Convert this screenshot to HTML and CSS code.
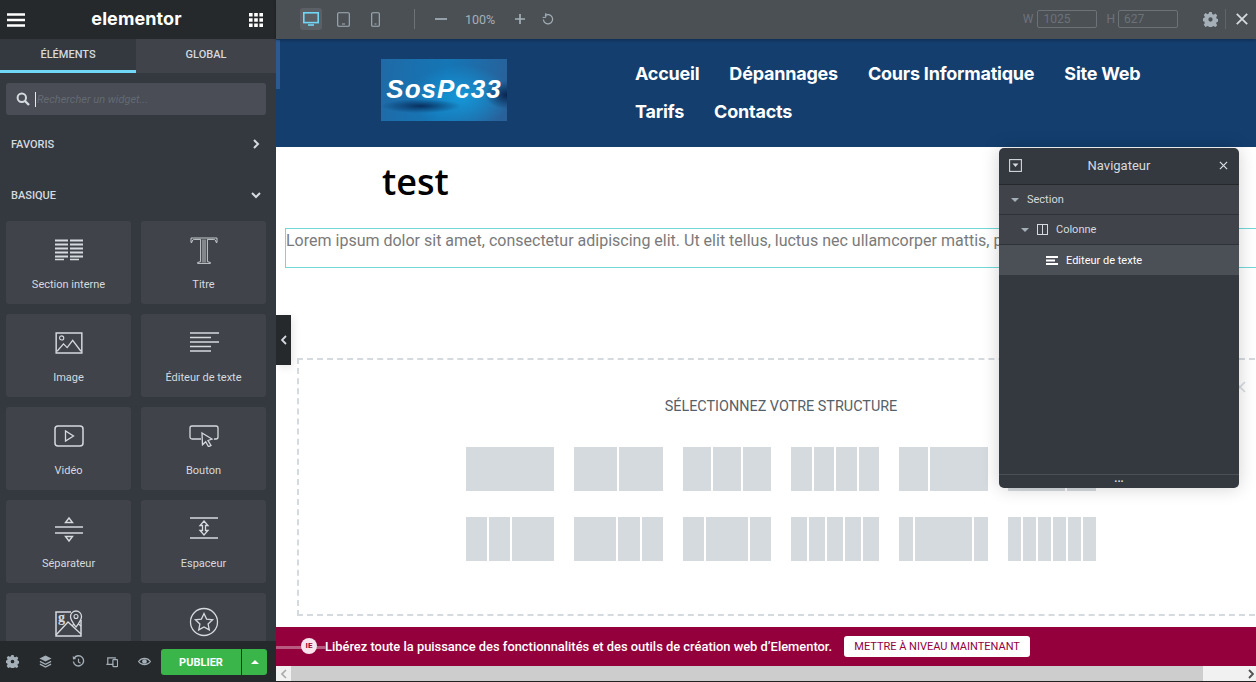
FILE: index.html
```html
<!DOCTYPE html>
<html lang="fr">
<head>
<meta charset="utf-8">
<title>Elementor</title>
<link rel="stylesheet" href="styles.css">
</head>
<body>
<div class="app">
  <aside class="panel">
    <header class="panel-head">
      <svg class="ic-burger" viewBox="0 0 18 14"><path d="M0 1.500h18M0 7h18M0 12.500h18" stroke="#fff" stroke-width="2.400"/></svg>
      <span class="brand">elementor</span>
      <svg class="ic-apps" viewBox="0 0 14 14" fill="#fff"><path d="M0 0h3.600v3.600H0zM5.200 0h3.600v3.600H5.200zM10.400 0H14v3.600h-3.600zM0 5.200h3.600v3.600H0zM5.200 5.200h3.600v3.600H5.200zM10.400 5.200H14v3.600h-3.600zM0 10.400h3.600V14H0zM5.200 10.400h3.600V14H5.200zM10.400 10.400H14V14h-3.600z"/></svg>
    </header>
    <nav class="tabs">
      <div class="tab tab-on">ÉLÉMENTS</div>
      <div class="tab">GLOBAL</div>
    </nav>
    <div class="search">
      <svg class="ic-search" viewBox="0 0 14 14"><circle cx="5.800" cy="5.800" r="4.200" fill="none" stroke="#d5dadf" stroke-width="2"/><path d="M9 9l4 4" stroke="#d5dadf" stroke-width="2.400"/></svg>
      <span class="caret"></span>
      <span class="placeholder">Rechercher un widget...</span>
    </div>
    <div class="cat cat-first"><span>FAVORIS</span><svg class="chev" viewBox="0 0 10 10"><path d="M3 1l4 4-4 4" fill="none" stroke="#d5dadf" stroke-width="2"/></svg></div>
    <div class="cat cat-second"><span>BASIQUE</span><svg class="chev" viewBox="0 0 10 10"><path d="M1 3l4 4 4-4" fill="none" stroke="#d5dadf" stroke-width="2"/></svg></div>
    <div class="widgets">
      <div class="widget">
        <svg class="w-ic" viewBox="0 0 30 22"><path d="M1 1.500h13M16 1.500h13M1 5.500h13M16 5.500h13M1 9.500h13M16 9.500h13M1 13.500h13M16 13.500h13M1 17.500h13M16 17.500h13" stroke="#d5dadf" stroke-width="2" fill="none"/><path d="M1 20.500h9M16 20.500h9" stroke="#d5dadf" stroke-width="1.400" fill="none"/></svg>
        <span class="w-label">Section interne</span>
      </div>
      <div class="widget">
        <svg class="w-ic w-tall" viewBox="0 0 30 30"><path d="M2 7.500V3h26v4.500h-.8c-.5-2.200-1-3.100-3-3.100H18.400v22.200l3 .9v.9H8.600v-.9l3-.9V4.400H5.800c-2 0-2.500.9-3 3.100zM14 4.500v23M16 4.500v23" fill="none" stroke="#d5dadf" stroke-width=".9"/></svg>
        <span class="w-label">Titre</span>
      </div>
      <div class="widget">
        <svg class="w-ic" viewBox="0 0 30 24"><path d="M1 1h28v22H1z" fill="none" stroke="#d5dadf" stroke-width="1.600"/><circle cx="7" cy="6.500" r="2.300" fill="none" stroke="#d5dadf" stroke-width="1.200"/><path d="M2 21l7-8 4 4 6-8 9 12" fill="none" stroke="#d5dadf" stroke-width="1.400"/></svg>
        <span class="w-label">Image</span>
      </div>
      <div class="widget">
        <svg class="w-ic" viewBox="0 0 30 22"><path d="M1 1h29M1 5.500h21M1 10h29M1 14.500h21M1 19h21" stroke="#d5dadf" stroke-width="1.300" fill="none"/></svg>
        <span class="w-label">Éditeur de texte</span>
      </div>
      <div class="widget">
        <svg class="w-ic" viewBox="0 0 30 22"><rect x="1" y="1" width="28" height="20" rx="3" fill="none" stroke="#d5dadf" stroke-width="1.500"/><path d="M11.500 6v10l8-5z" fill="none" stroke="#d5dadf" stroke-width="1.300"/></svg>
        <span class="w-label">Vidéo</span>
      </div>
      <div class="widget">
        <svg class="w-ic" viewBox="0 0 30 22"><path d="M12 14H3a2 2 0 0 1-2-2V3a2 2 0 0 1 2-2h24a2 2 0 0 1 2 2v9a2 2 0 0 1-2 2h-2" fill="none" stroke="#d5dadf" stroke-width="1.300"/><path d="M13 8l10 6-4 1.500 3 5-2.500 1.200-2.800-5-3.200 3z" fill="none" stroke="#d5dadf" stroke-width="1.300"/></svg>
        <span class="w-label">Bouton</span>
      </div>
      <div class="widget">
        <svg class="w-ic w-tall" viewBox="0 0 30 30"><path d="M1 13h28M1 19h28" stroke="#d5dadf" stroke-width="1.300"/><path d="M15 4l3.500 4.500h-7zM15 27l-3.500-4.500h7z" fill="none" stroke="#d5dadf" stroke-width="1.400"/></svg>
        <span class="w-label">Séparateur</span>
      </div>
      <div class="widget">
        <svg class="w-ic w-tall" viewBox="0 0 30 30"><path d="M1 4h28M1 24h28" stroke="#d5dadf" stroke-width="1.300"/><path d="M15 7l4 4.500h-2.500v5H19l-4 4.500-4-4.500h2.500v-5H11z" fill="none" stroke="#d5dadf" stroke-width="1.300"/></svg>
        <span class="w-label">Espaceur</span>
      </div>
      <div class="widget">
        <svg class="w-ic w-tall" viewBox="0 0 30 30"><path d="M17 5H2v24h25V13" fill="none" stroke="#d5dadf" stroke-width="1.500"/><path d="M2 28l12-13 13 12M18 19l4-4 5 4" fill="none" stroke="#d5dadf" stroke-width="1.300"/><path d="M22 20c-3-4-5.500-7-5.500-10.500a5.500 5.500 0 0 1 11 0C27.500 13 25 16 22 20z" fill="#404349" stroke="#d5dadf" stroke-width="1.300"/><circle cx="22" cy="9.500" r="2" fill="none" stroke="#d5dadf" stroke-width="1.100"/><text class="g-mark" x="4" y="15">g</text></svg>
      </div>
      <div class="widget">
        <svg class="w-ic w-tall" viewBox="0 0 30 30"><circle cx="15" cy="15" r="13.500" fill="none" stroke="#d5dadf" stroke-width="1.300"/><path d="M15 6.500l2.600 5.600 6 .7-4.500 4.100 1.200 6L15 20l-5.300 2.900 1.200-6-4.500-4.100 6-.7z" fill="none" stroke="#d5dadf" stroke-width="1.300"/></svg>
      </div>
    </div>
    <footer class="panel-foot">
      <svg class="f-ic" viewBox="0 0 14 14"><path fill="#a4afb7" fill-rule="evenodd" d="M5.800 0h2.400l.4 1.900 1.300.6 1.700-1 1.700 1.700-1 1.700.5 1.300 2 .4v2.400l-2 .4-.5 1.300 1 1.700-1.700 1.700-1.700-1-1.300.5-.4 2H5.800l-.4-2-1.300-.5-1.700 1L.7 11.900l1-1.700-.5-1.300-2-.4V6.100l2-.4.500-1.300-1-1.700L2.400 1l1.700 1 1.300-.6zM7 5a2 2 0 1 0 0 4 2 2 0 0 0 0-4z"/></svg>
      <svg class="f-ic" viewBox="0 0 14 14"><path fill="#a4afb7" d="M7 .5l6.500 3.300L7 7 .5 3.800z"/><path d="M1 6.800L7 10l6-3.200M1 9.800L7 13l6-3.200" fill="none" stroke="#a4afb7" stroke-width="1.400"/></svg>
      <svg class="f-ic" viewBox="0 0 14 14"><path d="M2.200 3.500A5.500 5.500 0 1 1 1.500 7" fill="none" stroke="#a4afb7" stroke-width="1.500"/><path d="M.8 1.200l.3 3.600 3.500-.5z" fill="#a4afb7"/><path d="M7 4v3.500l2.200 1.300" fill="none" stroke="#a4afb7" stroke-width="1.300"/></svg>
      <svg class="f-ic" viewBox="0 0 14 14"><path d="M9 10H1.500M3 10V3h8v1" fill="none" stroke="#a4afb7" stroke-width="1.300"/><rect x="8.500" y="5" width="5" height="7.500" rx=".6" fill="none" stroke="#a4afb7" stroke-width="1.300"/></svg>
      <svg class="f-ic" viewBox="0 0 14 14"><path d="M.6 7C3.800 2.500 10.200 2.500 13.400 7 10.200 11.500 3.800 11.500.6 7z" fill="none" stroke="#a4afb7" stroke-width="1.300"/><circle cx="7" cy="7" r="2.500" fill="#a4afb7"/></svg>
      <div class="publish">
        <span class="pub-main">PUBLIER</span>
        <span class="pub-arrow"><svg class="pub-caret" viewBox="0 0 8 4"><path d="M0 4l4-4 4 4z" fill="#fff"/></svg></span>
      </div>
    </footer>
  </aside>

  <main class="workspace">
    <div class="topbar">
      <span class="device device-on">
        <svg class="dev-desk" viewBox="0 0 16 14"><rect x=".8" y=".8" width="14.400" height="9.800" fill="none" stroke="#71d7f7" stroke-width="1.600"/><path d="M5 13h6" stroke="#71d7f7" stroke-width="1.600"/></svg>
      </span>
      <svg class="dev-tab" viewBox="0 0 13 15"><rect x=".7" y=".7" width="11.600" height="13.600" rx="1" fill="none" stroke="#a4afb7" stroke-width="1.100"/><path d="M5 12h3" stroke="#a4afb7"/></svg>
      <svg class="dev-mob" viewBox="0 0 9 15"><rect x=".7" y=".7" width="7.600" height="13.600" rx="1" fill="none" stroke="#a4afb7" stroke-width="1.100"/><path d="M3.500 12h2" stroke="#a4afb7"/></svg>
      <span class="bar-sep"></span>
      <svg class="zoom-ic zoom-minus" viewBox="0 0 12 12"><path d="M0 6h12" stroke="#a4afb7" stroke-width="1.700"/></svg>
      <span class="zoom-val">100%</span>
      <svg class="zoom-ic zoom-plus" viewBox="0 0 12 12"><path d="M0 6h10M5 1v10" stroke="#a4afb7" stroke-width="1.700"/></svg>
      <svg class="zoom-ic zoom-reset" viewBox="0 0 12 12"><path d="M3 2.200A4.600 4.600 0 1 1 1.400 6" fill="none" stroke="#a4afb7" stroke-width="1.200" transform="translate(0 .5)"/><path d="M3.800 0v4.400H.6" fill="none" stroke="#a4afb7" stroke-width="1"/></svg>
      <span class="spring"></span>
      <span class="dim-l">W</span><span class="dim-in">1025</span>
      <span class="dim-l dim-h">H</span><span class="dim-in">627</span>
      <svg class="bar-gear" viewBox="0 0 14 14"><path fill="#a4afb7" fill-rule="evenodd" d="M5.800 0h2.400l.4 1.900 1.300.6 1.700-1 1.700 1.700-1 1.700.5 1.300 2 .4v2.400l-2 .4-.5 1.300 1 1.700-1.700 1.700-1.700-1-1.300.5-.4 2H5.800l-.4-2-1.300-.5-1.700 1L.7 11.900l1-1.700-.5-1.300-2-.4V6.100l2-.4.500-1.300-1-1.700L2.400 1l1.700 1 1.300-.6zM7 5a2 2 0 1 0 0 4 2 2 0 0 0 0-4z"/></svg>
      <span class="bar-sep2"></span>
      <svg class="bar-x" viewBox="0 0 12 12"><path d="M.8.8l10.400 10.400M11.200.8L.8 11.200" stroke="#d5dadf" stroke-width="1.800"/></svg>
    </div>

    <div class="preview">
      <div class="site-head">
        <div class="logo"><span class="logo-text">SosPc33</span></div>
        <ul class="menu">
          <li>Accueil</li><li>Dépannages</li><li>Cours Informatique</li><li>Site Web</li><li>Tarifs</li><li>Contacts</li>
        </ul>
      </div>
      <h1 class="page-title">test</h1>
      <div class="text-box">Lorem ipsum dolor sit amet, consectetur adipiscing elit. Ut elit tellus, luctus nec ullamcorper mattis, pulvinar dapibus leo.</div>
      <section class="structure">
        <p class="structure-title">SÉLECTIONNEZ VOTRE STRUCTURE</p>
        <div class="presets">
          <div class="preset"><i class="c1"></i></div>
          <div class="preset"><i class="c1"></i><i class="c1"></i></div>
          <div class="preset"><i class="c1"></i><i class="c1"></i><i class="c1"></i></div>
          <div class="preset"><i class="c1"></i><i class="c1"></i><i class="c1"></i><i class="c1"></i></div>
          <div class="preset"><i class="c1"></i><i class="c2"></i></div>
          <div class="preset"><i class="c2"></i><i class="c1"></i></div>
          <div class="preset"><i class="c1"></i><i class="c1"></i><i class="c2"></i></div>
          <div class="preset"><i class="c2"></i><i class="c1"></i><i class="c1"></i></div>
          <div class="preset"><i class="c1"></i><i class="c2"></i><i class="c1"></i></div>
          <div class="preset"><i class="c1"></i><i class="c1"></i><i class="c1"></i><i class="c1"></i><i class="c1"></i></div>
          <div class="preset"><i class="c1"></i><i class="c4"></i><i class="c1"></i></div>
          <div class="preset"><i class="c1"></i><i class="c1"></i><i class="c1"></i><i class="c1"></i><i class="c1"></i><i class="c1"></i></div>
        </div>
      </section>
      <svg class="structure-x" viewBox="0 0 12 12"><path d="M1 1l10 10M11 1L1 11" stroke="#d5dadf" stroke-width="1.600"/></svg>
      <span class="sb-strip"></span>
      <div class="handle"><svg class="handle-ic" viewBox="0 0 6 10"><path d="M5 1L1 5l4 4" fill="none" stroke="#d5dadf" stroke-width="1.800"/></svg></div>

      <div class="navigator">
        <div class="nav-head">
          <svg class="nav-collapse" viewBox="0 0 13 13"><rect x=".6" y=".6" width="11.800" height="11.800" fill="none" stroke="#d5dadf" stroke-width="1.100"/><path d="M3.500 4.500h6l-3 3.500z" fill="#d5dadf"/></svg>
          <span class="nav-title">Navigateur</span>
          <svg class="nav-x" viewBox="0 0 10 10"><path d="M1 1l8 8M9 1L1 9" stroke="#d5dadf" stroke-width="1.400"/></svg>
        </div>
        <div class="nav-row nav-l0"><i class="tri"></i>Section</div>
        <div class="nav-row nav-l1"><i class="tri"></i><svg class="col-ic" viewBox="0 0 11 11"><rect x=".5" y=".5" width="10" height="10" fill="none" stroke="#d5dadf"/><path d="M5.500 0v11" stroke="#d5dadf"/></svg>Colonne</div>
        <div class="nav-row nav-l2"><svg class="txt-ic" viewBox="0 0 12 9"><path d="M0 1h12M0 4.500h9M0 8h12" stroke="#fff" stroke-width="1.800"/></svg>Editeur de texte</div>
        <div class="nav-fill"></div>
        <div class="nav-foot">...</div>
      </div>
    </div>

    <div class="promo">
      <span class="promo-line"></span>
      <span class="promo-badge">IE</span>
      <span class="promo-text">Libérez toute la puissance des fonctionnalités et des outils de création web d’Elementor.</span>
      <span class="promo-btn">METTRE À NIVEAU MAINTENANT</span>
    </div>
    <div class="hscroll">
      <span class="hs-btn hs-left"><svg class="hs-ic" viewBox="0 0 6 10"><path d="M5 1L1 5l4 4" fill="none" stroke="#a9a9a9" stroke-width="1.600"/></svg></span>
      <span class="hs-thumb"></span>
      <span class="hs-btn hs-right"><svg class="hs-ic" viewBox="0 0 6 10"><path d="M1 1l4 4-4 4" fill="none" stroke="#505050" stroke-width="1.800"/></svg></span>
    </div>
  </main>
</div>
</body>
</html>
```

FILE: styles.css
```css
* { box-sizing: border-box; }
html, body { margin: 0; height: 100%; overflow: hidden; }
body { font-family: Roboto, "Liberation Sans", sans-serif; background: #fff; }
.app { display: flex; width: 1256px; height: 682px; }

/* Left panel */
.panel { width: 276px; flex: none; height: 682px; background: #34383f; display: flex; flex-direction: column; color: #d5dadf; }
.panel-head { height: 39px; flex: none; background: #26292c; display: flex; align-items: center; padding: 0 8px 0 7px; justify-content: space-between; }
.ic-burger { width: 18px; height: 14px; }
.ic-apps { width: 14px; height: 14px; margin-right: 5px; }
.brand { font-family: Inter, "Liberation Sans", sans-serif; font-weight: 700; font-size: 18px; color: #fff; letter-spacing: .1px; margin-right: 1px; padding-bottom: 2px; }
.tabs { display: flex; height: 34px; flex: none; }
.tab { width: 140px; background: #404349; font-size: 11px; font-weight: 500; color: #d5dadf; display: flex; align-items: center; justify-content: center; padding-bottom: 4px; }
.tab-on { width: 136px; background: #34383f; border-bottom: 3px solid #71d7f7; padding-bottom: 1px; }
.search { height: 32px; margin: 10px 10px 0 6px; background: #4a4d55; border-radius: 3px; display: flex; align-items: center; padding-left: 10px; flex: none; }
.ic-search { width: 14px; height: 14px; flex: none; }
.caret { width: 1px; height: 15px; background: #e6e9ec; margin-left: 5px; }
.placeholder { font-size: 11px; font-style: italic; color: #626b74; margin-left: 1px; }
.cat { display: flex; justify-content: space-between; align-items: center; font-size: 11px; font-weight: 500; padding: 0 15px 0 11px; height: 14px; flex: none; color: #d5dadf; }
.cat-first { margin-top: 22px; }
.cat-second { margin-top: 37px; }
.chev { width: 10px; height: 10px; }
.widgets { flex: 1; min-height: 0; overflow: hidden; display: grid; grid-template-columns: 125px 125px; grid-auto-rows: 83px; gap: 10px; padding: 19px 0 0 6px; }
.widget { background: #404349; border-radius: 3px; display: flex; flex-direction: column; align-items: center; position: relative; }
.w-ic { width: 30px; height: 22px; margin-top: 18px; flex: none; }
.w-tall { height: 30px; margin-top: 14px; }
.w-label { font-size: 11px; color: #d5dadf; position: absolute; top: 57px; white-space: nowrap; }
.g-mark { font-family: "Liberation Serif", serif; font-size: 14px; font-weight: 700; fill: #d5dadf; }
.panel-foot { height: 41px; flex: none; background: #26292c; display: flex; align-items: center; padding-left: 6px; }
.f-ic { width: 13px; height: 13px; margin-right: 20px; flex: none; }
.f-ic:last-of-type { margin-right: 10px; }
.publish { display: flex; height: 26px; margin-top: 1px; }
.pub-main { width: 80px; background: #39b54a; color: #fff; font-size: 11px; font-weight: 700; display: flex; align-items: center; justify-content: center; border-radius: 3px 0 0 3px; }
.pub-arrow { width: 25px; margin-left: 1px; background: #39b54a; border-radius: 0 3px 3px 0; display: flex; align-items: center; justify-content: center; }
.pub-caret { width: 8px; height: 4px; }

/* Workspace */
.workspace { width: 980px; flex: none; display: flex; flex-direction: column; height: 682px; }
.topbar { height: 39px; flex: none; background: #4b5055; display: flex; align-items: center; padding: 0 0 1px 24px; box-shadow: 0 1px 3px rgba(0,0,0,.3); position: relative; z-index: 3; }
.device { width: 22px; height: 22px; display: flex; align-items: center; justify-content: center; border-radius: 3px; flex: none; }
.device-on { background: #5b6066; }
.dev-desk { width: 16px; height: 14px; }
.dev-tab { width: 13px; height: 15px; margin-left: 15px; }
.dev-mob { width: 9px; height: 15px; margin-left: 21px; }
.bar-sep { width: 1px; height: 20px; background: #6d7278; margin-left: 34px; }
.zoom-ic { width: 12px; height: 12px; flex: none; }
.zoom-minus { margin-left: 20px; }
.zoom-val { font-size: 12.500px; color: #a4afb7; width: 32px; margin-left: 18px; }
.zoom-plus { margin-left: 18px; }
.zoom-reset { margin-left: 15px; }
.spring { flex: 1; }
.dim-l { font-size: 12px; color: #6d7278; margin-right: 4px; }
.dim-h { margin-left: 9px; margin-right: 3px; }
.dim-in { width: 60px; height: 18px; border: 1px solid #6d7278; border-radius: 2px; font-size: 12px; color: #6d7278; padding: 1px 0 0 5px; line-height: 14px; }
.bar-gear { width: 15px; height: 15px; margin-left: 25px; }
.bar-sep2 { width: 1px; height: 20px; background: #5f656b; margin-left: 7px; }
.bar-x { width: 12px; height: 12px; margin-left: 10px; margin-right: 8px; }

/* Preview */
.preview { flex: 1; min-height: 0; position: relative; overflow: hidden; background: #fff; }
.site-head { height: 108px; background: #133e6e; display: flex; padding: 20px 0 0 105px; }
.logo { width: 126px; height: 62px; flex: none; background:
    radial-gradient(ellipse 40px 7px at 40px 47px, rgba(5,35,80,.85), transparent),
    radial-gradient(ellipse 22px 14px at 126px 36px, rgba(5,30,70,.9), transparent),
    radial-gradient(ellipse 50px 32px at 80px 38px, #1597d8 0%, transparent 100%),
    linear-gradient(100deg, #1f6aa6, #1576b6 50%, #2a5f97); display: flex; align-items: center; justify-content: center; }
.logo-text { font-family: "Liberation Sans", sans-serif; font-style: italic; font-weight: 700; font-size: 26px; letter-spacing: 1px; color: #fff; margin-top: -2px; }
.menu { list-style: none; margin: 0 0 0 128px; padding: 0; width: 560px; display: flex; flex-wrap: wrap; column-gap: 30px; align-content: flex-start; }
.menu li { font-family: Inter, "Liberation Sans", sans-serif; font-weight: 700; font-size: 18px; letter-spacing: -.22px; color: #fff; height: 38px; line-height: 30px; white-space: nowrap; }
.page-title { font-family: "Open Sans", sans-serif; font-weight: 600; font-size: 36px; line-height: 46px; margin: 12px 0 0 106px; color: #000; }
.text-box { height: 40px; width: 1100px; margin: 23px 0 0 9px; border: 1px solid #71d7d7; font-size: 16px; line-height: 24px; color: #7a7a7a; white-space: nowrap; overflow: hidden; }
.structure { width: 968px; height: 258px; margin: 90px 0 0 21px; border: 2px dashed #d5dadf; display: flex; flex-direction: column; align-items: center; }
.structure-title { margin: 38px 0 0; font-size: 14.400px; line-height: 18px; color: #556068; }
.presets { display: grid; grid-template-columns: repeat(6, 88.400px); column-gap: 20px; row-gap: 26px; margin-top: 31px; }
.preset { height: 44px; display: flex; gap: 2px; }
.preset i { display: block; background: #d5dadf; min-width: 0; }
.c1 { flex: 1 1 0; }
.c2 { flex: 2 1 0; }
.c4 { flex: 4 1 0; }
.structure-x { position: absolute; left: 958px; top: 342px; width: 12px; height: 12px; }
.sb-strip { position: absolute; left: 0; top: 1px; width: 4px; height: 49px; background: #2a5a8f; }
.handle { position: absolute; left: 0; top: 276px; width: 15px; height: 50px; background: #26292c; display: flex; align-items: center; justify-content: center; box-shadow: 2px 2px 8px rgba(0,0,0,.1); }
.handle-ic { width: 6px; height: 10px; }

/* Navigator */
.navigator { position: absolute; left: 723px; top: 109px; width: 240px; height: 340px; background: #34383f; border-radius: 5px; box-shadow: 0 0 18px rgba(0,0,0,.18); display: flex; flex-direction: column; color: #d5dadf; overflow: hidden; }
.nav-head { height: 37px; flex: none; display: flex; align-items: center; justify-content: center; position: relative; border-bottom: 1px solid #26292c; padding-bottom: 2px; }
.nav-title { font-size: 13px; }
.nav-collapse { position: absolute; left: 10px; top: 11px; width: 13px; height: 13px; }
.nav-x { position: absolute; right: 11px; top: 13px; width: 9px; height: 9px; }
.nav-row { height: 30px; flex: none; display: flex; align-items: center; font-size: 11px; background: #404349; border-bottom: 1px solid #2f3237; }
.nav-l0 { padding-left: 12px; }
.nav-l1 { padding-left: 22px; }
.nav-l2 { padding-left: 47px; background: #4b4f56; color: #fff; border-bottom: 0; }
.tri { width: 0; height: 0; border: 4px solid transparent; border-top: 4px solid #a4afb7; border-bottom: 0; margin-right: 8px; }
.col-ic { width: 11px; height: 11px; margin-right: 8px; }
.txt-ic { width: 12px; height: 9px; margin-right: 8px; }
.nav-fill { flex: 1; }
.nav-foot { height: 14px; flex: none; border-top: 1px solid #4b4f56; text-align: center; font-size: 11px; line-height: 8px; font-weight: 700; }

/* Promo + scrollbar */
.promo { height: 39px; flex: none; background: #93003c; display: flex; align-items: center; color: #fff; position: relative; padding-left: 49px; }
.promo-line { position: absolute; left: 0; top: 19px; width: 50px; height: 3px; background: #b85b80; }
.promo-badge { position: absolute; left: 25px; top: 11px; width: 16px; height: 16px; border-radius: 50%; background: #f7e4ec; color: #93003c; font-size: 8px; font-weight: 700; text-align: center; line-height: 16px; }
.promo-text { font-size: 12.900px; font-weight: 500; white-space: nowrap; }
.promo-btn { margin-left: 12px; width: 186px; height: 21px; background: #fff; border-radius: 3px; color: #93003c; font-size: 11px; display: flex; align-items: center; justify-content: center; white-space: nowrap; }
.hscroll { height: 16px; flex: none; display: flex; background: #f1f1f1; border-bottom: 1px solid #222; }
.hs-btn { display: flex; align-items: center; }
.hs-left { width: 15px; justify-content: center; }
.hs-right { flex: 1; justify-content: flex-end; padding-right: 2px; }
.hs-thumb { width: 912px; background: #cdcdcd; }
.hs-ic { width: 6px; height: 10px; }
```
